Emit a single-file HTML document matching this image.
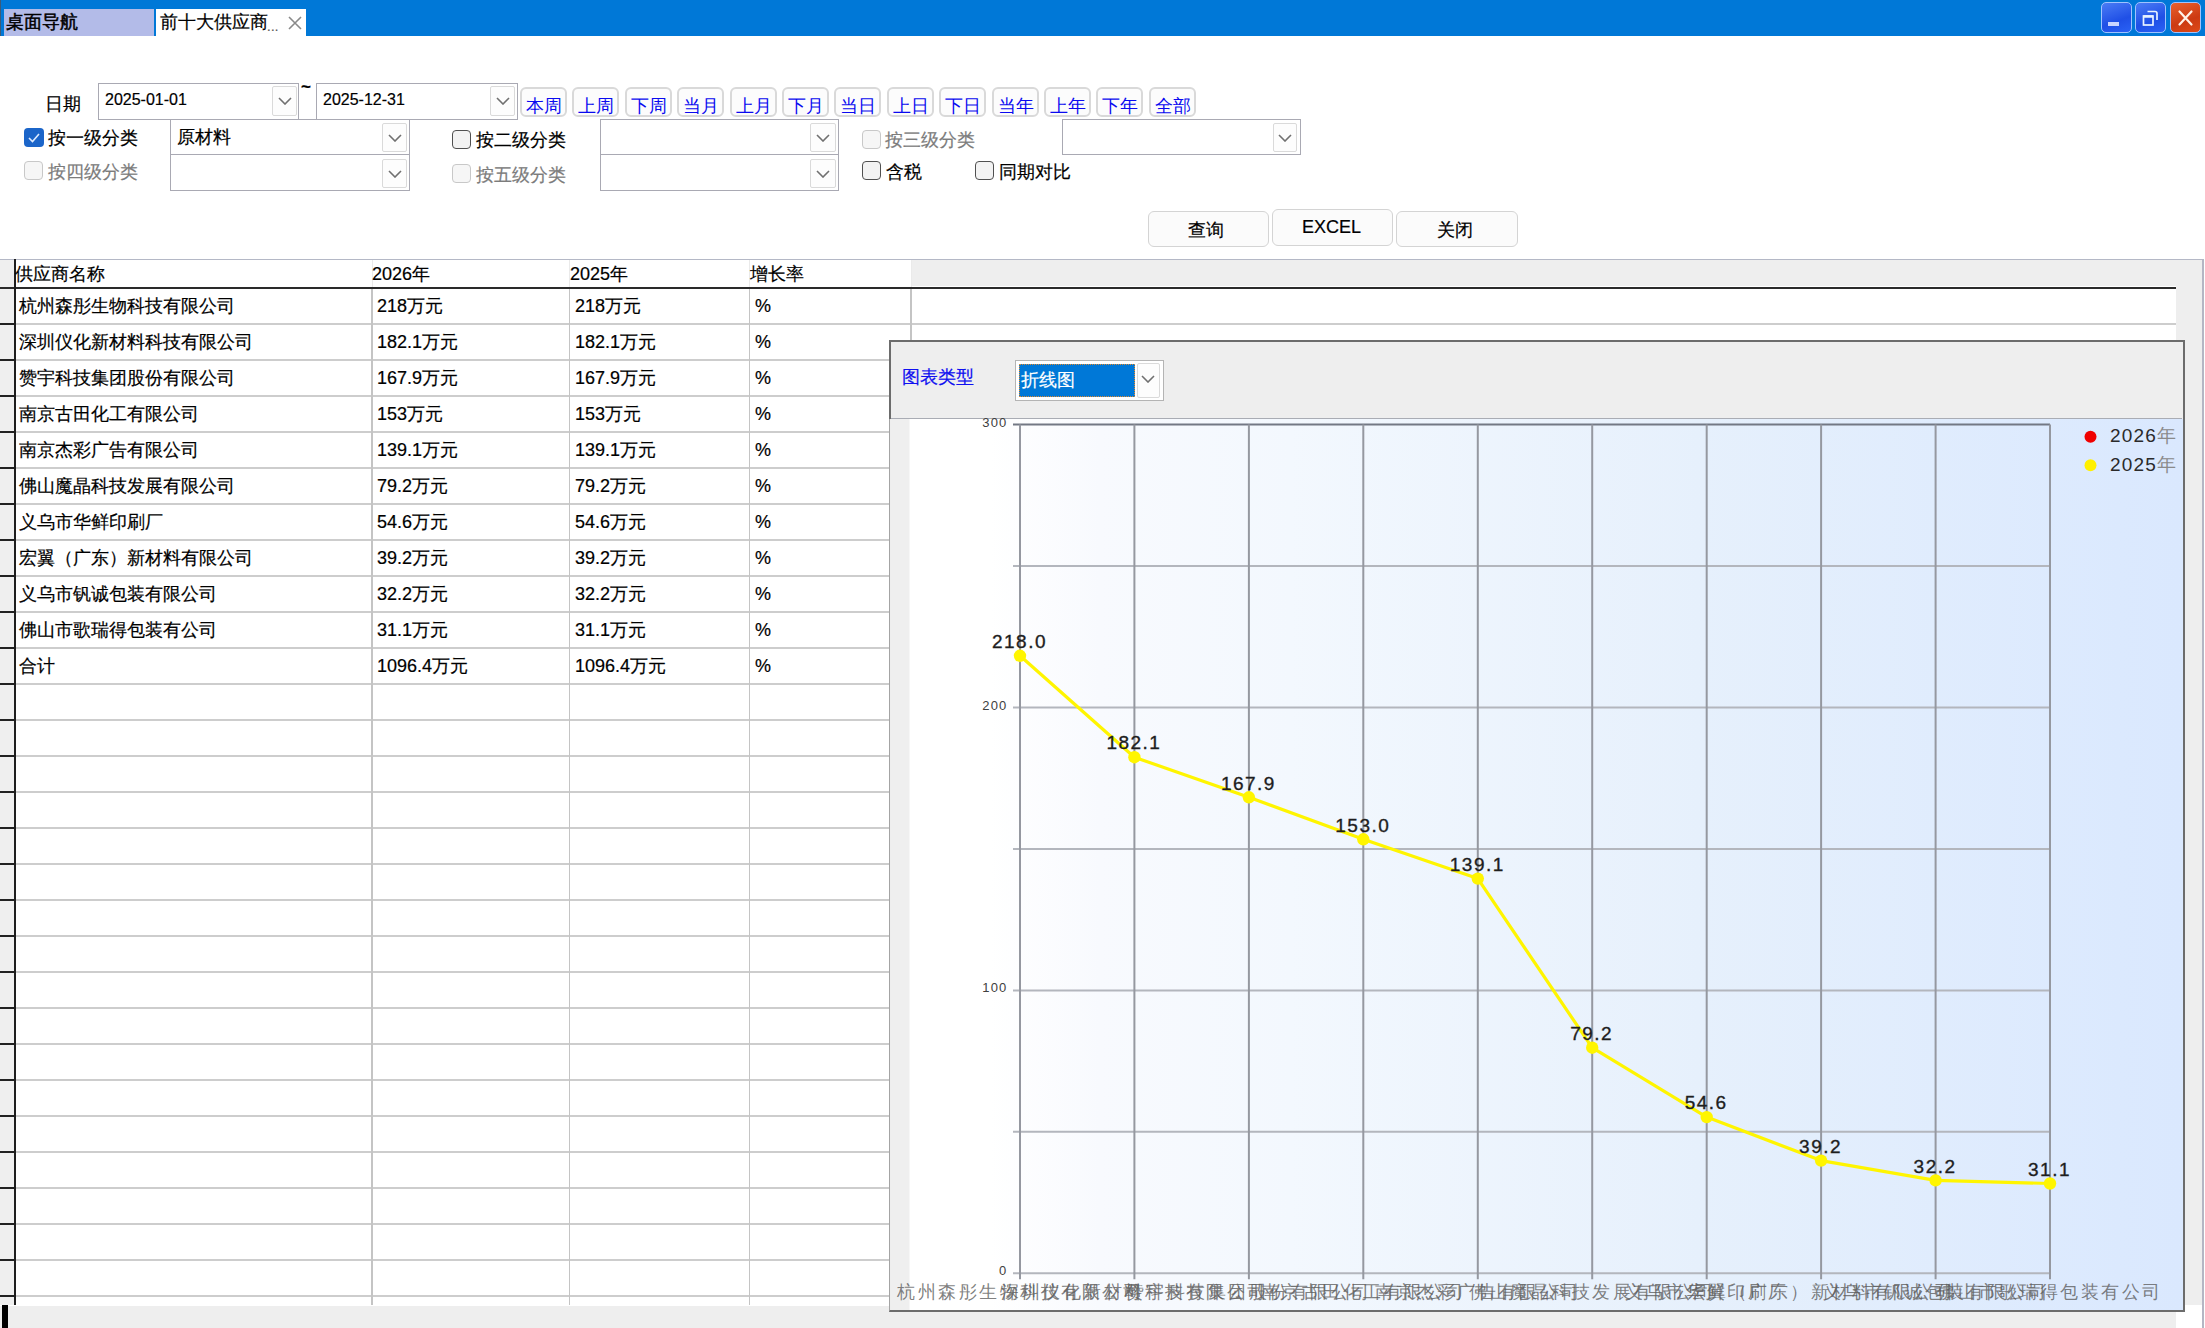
<!DOCTYPE html><html><head><meta charset="utf-8"><style>
*{box-sizing:border-box;margin:0;padding:0}
html,body{width:2205px;height:1328px;overflow:hidden;background:#fff;font-family:"Liberation Sans", sans-serif;color:#000}
.a{position:absolute}
.t{position:absolute;white-space:nowrap;line-height:1;-webkit-text-stroke:0.2px currentColor}
.cb{position:absolute;width:19px;height:19px;border:1.5px solid #505050;border-radius:4px;background:#F3F3F3}
.cbd{border-color:#C8C8C8;background:#F6F6F6}
.combo{position:absolute;border:1.5px solid #A9A9B3;background:#fff}
.dd{position:absolute;border:1px solid #DADADA;border-radius:2px;background:#FDFDFD}
.qb{position:absolute;top:87px;width:47px;height:30px;border:2px solid #D9D9D9;border-radius:6px;background:#FCFCFC;color:#0A0AF0;font-size:18px}
.qb span{position:absolute;left:4px;top:8px;line-height:1}
.btn{position:absolute;border:1.5px solid #D4D4D4;border-radius:6px;background:#FBFBFB;font-size:18px}
</style></head><body>
<div class="a" style="left:0;top:0;width:2205px;height:36px;background:#0078D7"></div>
<div class="a" style="left:0;top:0;width:1px;height:36px;background:#3C5A78"></div>
<div class="a" style="left:4px;top:9px;width:150px;height:27px;background:#B3BBE8"></div>
<div class="t" style="left:6px;top:13px;font-size:18px;-webkit-text-stroke:0.5px #000">桌面导航</div>
<div class="a" style="left:156px;top:9px;width:150px;height:27px;background:#FFFFFF"></div>
<div class="t" style="left:160px;top:13px;font-size:18px">前十大供应商</div>
<div class="t" style="left:267px;top:20px;font-size:13px;color:#555;letter-spacing:0.3px">...</div>
<svg class="a" style="left:288px;top:16px" width="14" height="14" viewBox="0 0 14 14"><path d="M1,1 L13,13 M13,1 L1,13" stroke="#8A8A8A" stroke-width="1.6"/></svg>
<div class="a" style="left:2101px;top:2px;width:31px;height:31px;border:1.5px solid #9EC3FF;border-radius:5px;background:linear-gradient(160deg,#4A7CF5,#1F4FE6 60%,#2A62F5)"></div><div class="a" style="left:2108px;top:22px;width:11px;height:4px;background:#C9D5FF"></div>
<div class="a" style="left:2135px;top:2px;width:31px;height:31px;border:1.5px solid #9EC3FF;border-radius:5px;background:linear-gradient(160deg,#4A7CF5,#1F4FE6 60%,#2A62F5)"></div><svg class="a" style="left:2140px;top:8px" width="22" height="20" viewBox="0 0 22 20"><rect x="3.5" y="8" width="9.5" height="9" fill="none" stroke="#E8F2FF" stroke-width="1.7"/><path d="M3.5,8.5 H13" stroke="#E8F2FF" stroke-width="2.5"/><path d="M7.5,3.5 H15 Q17,3.5 17,5.5 V12" fill="none" stroke="#E8F2FF" stroke-width="1.7"/></svg>
<div class="a" style="left:2170px;top:2px;width:31px;height:31px;border:1.5px solid #9EC3FF;border-radius:5px;background:linear-gradient(160deg,#E8602E,#CC3A12 60%,#DE4A18)"></div><svg class="a" style="left:2175px;top:8px" width="21" height="20" viewBox="0 0 21 20"><path d="M4.5,3.5 L16.5,16.5 M16.5,3.5 L4.5,16.5" stroke="#FFF2E8" stroke-width="2.2" stroke-linecap="round"/></svg>
<div class="t" style="left:45px;top:95px;font-size:18px">日期</div>
<div class="combo" style="left:98px;top:83px;width:201px;height:36.5px"></div>
<div class="dd" style="left:272px;top:86px;width:25px;height:30px"></div>
<svg class="a" style="left:278px;top:97px" width="14" height="8" viewBox="0 0 14 8"><polyline points="1,1 7.0,7 13,1" fill="none" stroke="#707070" stroke-width="1.6"/></svg>
<div class="t" style="left:105px;top:92px;font-size:16px">2025-01-01</div>
<div class="combo" style="left:316px;top:83px;width:202px;height:36.5px"></div>
<div class="dd" style="left:490px;top:86px;width:25px;height:30px"></div>
<svg class="a" style="left:496px;top:97px" width="14" height="8" viewBox="0 0 14 8"><polyline points="1,1 7.0,7 13,1" fill="none" stroke="#707070" stroke-width="1.6"/></svg>
<div class="t" style="left:323px;top:92px;font-size:16px">2025-12-31</div>
<div class="t" style="left:301px;top:78px;font-size:17px;font-weight:bold">~</div>
<div class="qb" style="left:520px"><span>本周</span></div>
<div class="qb" style="left:572px"><span>上周</span></div>
<div class="qb" style="left:625px"><span>下周</span></div>
<div class="qb" style="left:677px"><span>当月</span></div>
<div class="qb" style="left:730px"><span>上月</span></div>
<div class="qb" style="left:782px"><span>下月</span></div>
<div class="qb" style="left:834px"><span>当日</span></div>
<div class="qb" style="left:887px"><span>上日</span></div>
<div class="qb" style="left:939px"><span>下日</span></div>
<div class="qb" style="left:992px"><span>当年</span></div>
<div class="qb" style="left:1044px"><span>上年</span></div>
<div class="qb" style="left:1096px"><span>下年</span></div>
<div class="qb" style="left:1149px"><span>全部</span></div>
<div class="a" style="left:24px;top:128px;width:20px;height:19px;border-radius:4px;background:#1B65C9"></div>
<svg class="a" style="left:24px;top:128px" width="20" height="19" viewBox="0 0 20 19"><polyline points="5,10 8.5,13.5 15,6" fill="none" stroke="#DDEBFF" stroke-width="1.6"/></svg>
<div class="t" style="left:48px;top:129px;font-size:18px">按一级分类</div>
<div class="combo" style="left:170px;top:118.5px;width:240px;height:37px"></div>
<div class="dd" style="left:382px;top:123px;width:25px;height:29px"></div>
<svg class="a" style="left:388px;top:134px" width="14" height="8" viewBox="0 0 14 8"><polyline points="1,1 7.0,7 13,1" fill="none" stroke="#707070" stroke-width="1.6"/></svg>
<div class="t" style="left:177px;top:128px;font-size:18px">原材料</div>
<div class="cb" style="left:452px;top:130px"></div>
<div class="t" style="left:476px;top:131px;font-size:18px">按二级分类</div>
<div class="combo" style="left:600px;top:118.5px;width:239px;height:37px"></div>
<div class="dd" style="left:810px;top:123px;width:26px;height:29px"></div>
<svg class="a" style="left:816px;top:134px" width="14" height="8" viewBox="0 0 14 8"><polyline points="1,1 7.0,7 13,1" fill="none" stroke="#707070" stroke-width="1.6"/></svg>
<div class="cb cbd" style="left:862px;top:130px"></div>
<div class="t" style="left:885px;top:131px;font-size:18px;color:#7C7C7C">按三级分类</div>
<div class="combo" style="left:1062px;top:119px;width:239px;height:36px"></div>
<div class="dd" style="left:1273px;top:123px;width:24px;height:29px"></div>
<svg class="a" style="left:1278px;top:134px" width="14" height="8" viewBox="0 0 14 8"><polyline points="1,1 7.0,7 13,1" fill="none" stroke="#707070" stroke-width="1.6"/></svg>
<div class="cb cbd" style="left:24px;top:161px"></div>
<div class="t" style="left:48px;top:163px;font-size:18px;color:#7C7C7C">按四级分类</div>
<div class="combo" style="left:170px;top:153.5px;width:240px;height:37.5px"></div>
<div class="dd" style="left:382px;top:159px;width:25px;height:29px"></div>
<svg class="a" style="left:388px;top:170px" width="14" height="8" viewBox="0 0 14 8"><polyline points="1,1 7.0,7 13,1" fill="none" stroke="#707070" stroke-width="1.6"/></svg>
<div class="cb cbd" style="left:452px;top:164px"></div>
<div class="t" style="left:476px;top:166px;font-size:18px;color:#7C7C7C">按五级分类</div>
<div class="combo" style="left:600px;top:153.5px;width:239px;height:37.5px"></div>
<div class="dd" style="left:810px;top:159px;width:26px;height:29px"></div>
<svg class="a" style="left:816px;top:170px" width="14" height="8" viewBox="0 0 14 8"><polyline points="1,1 7.0,7 13,1" fill="none" stroke="#707070" stroke-width="1.6"/></svg>
<div class="cb" style="left:862px;top:161px"></div>
<div class="t" style="left:886px;top:163px;font-size:18px">含税</div>
<div class="cb" style="left:975px;top:161px"></div>
<div class="t" style="left:999px;top:163px;font-size:18px">同期对比</div>
<div class="btn" style="left:1148px;top:211px;width:121px;height:36px"></div>
<div class="t" style="left:1188px;top:221px;font-size:18px">查询</div>
<div class="btn" style="left:1272px;top:209px;width:121px;height:37px"></div>
<div class="t" style="left:1302px;top:218px;font-size:18px">EXCEL</div>
<div class="btn" style="left:1396px;top:211px;width:122px;height:36px"></div>
<div class="t" style="left:1437px;top:221px;font-size:18px">关闭</div>
<div class="a" style="left:0;top:258.5px;width:2204px;height:1.5px;background:#B4B8C6"></div>
<div class="a" style="left:2176px;top:260px;width:27px;height:1045px;background:#EEEEEE"></div>
<div class="a" style="left:2202px;top:259px;width:1.5px;height:1069px;background:#B4B6C4"></div>
<div class="a" style="left:911px;top:260px;width:1265px;height:26px;background:#EEEEEE"></div>
<div class="a" style="left:0;top:260px;width:14px;height:1045px;background:#EFEFEF"></div>
<div class="a" style="left:15px;top:323px;width:2161px;height:2px;background:#CDCDCD"></div>
<div class="a" style="left:0;top:323px;width:15px;height:2px;background:#222"></div>
<div class="a" style="left:15px;top:359px;width:2161px;height:2px;background:#CDCDCD"></div>
<div class="a" style="left:0;top:359px;width:15px;height:2px;background:#222"></div>
<div class="a" style="left:15px;top:395px;width:2161px;height:2px;background:#CDCDCD"></div>
<div class="a" style="left:0;top:395px;width:15px;height:2px;background:#222"></div>
<div class="a" style="left:15px;top:431px;width:2161px;height:2px;background:#CDCDCD"></div>
<div class="a" style="left:0;top:431px;width:15px;height:2px;background:#222"></div>
<div class="a" style="left:15px;top:467px;width:2161px;height:2px;background:#CDCDCD"></div>
<div class="a" style="left:0;top:467px;width:15px;height:2px;background:#222"></div>
<div class="a" style="left:15px;top:503px;width:2161px;height:2px;background:#CDCDCD"></div>
<div class="a" style="left:0;top:503px;width:15px;height:2px;background:#222"></div>
<div class="a" style="left:15px;top:539px;width:2161px;height:2px;background:#CDCDCD"></div>
<div class="a" style="left:0;top:539px;width:15px;height:2px;background:#222"></div>
<div class="a" style="left:15px;top:575px;width:2161px;height:2px;background:#CDCDCD"></div>
<div class="a" style="left:0;top:575px;width:15px;height:2px;background:#222"></div>
<div class="a" style="left:15px;top:611px;width:2161px;height:2px;background:#CDCDCD"></div>
<div class="a" style="left:0;top:611px;width:15px;height:2px;background:#222"></div>
<div class="a" style="left:15px;top:647px;width:2161px;height:2px;background:#CDCDCD"></div>
<div class="a" style="left:0;top:647px;width:15px;height:2px;background:#222"></div>
<div class="a" style="left:15px;top:683px;width:2161px;height:2px;background:#CDCDCD"></div>
<div class="a" style="left:0;top:683px;width:15px;height:2px;background:#222"></div>
<div class="a" style="left:15px;top:719px;width:2161px;height:2px;background:#CDCDCD"></div>
<div class="a" style="left:0;top:719px;width:15px;height:2px;background:#222"></div>
<div class="a" style="left:15px;top:755px;width:2161px;height:2px;background:#CDCDCD"></div>
<div class="a" style="left:0;top:755px;width:15px;height:2px;background:#222"></div>
<div class="a" style="left:15px;top:791px;width:2161px;height:2px;background:#CDCDCD"></div>
<div class="a" style="left:0;top:791px;width:15px;height:2px;background:#222"></div>
<div class="a" style="left:15px;top:827px;width:2161px;height:2px;background:#CDCDCD"></div>
<div class="a" style="left:0;top:827px;width:15px;height:2px;background:#222"></div>
<div class="a" style="left:15px;top:863px;width:2161px;height:2px;background:#CDCDCD"></div>
<div class="a" style="left:0;top:863px;width:15px;height:2px;background:#222"></div>
<div class="a" style="left:15px;top:899px;width:2161px;height:2px;background:#CDCDCD"></div>
<div class="a" style="left:0;top:899px;width:15px;height:2px;background:#222"></div>
<div class="a" style="left:15px;top:935px;width:2161px;height:2px;background:#CDCDCD"></div>
<div class="a" style="left:0;top:935px;width:15px;height:2px;background:#222"></div>
<div class="a" style="left:15px;top:971px;width:2161px;height:2px;background:#CDCDCD"></div>
<div class="a" style="left:0;top:971px;width:15px;height:2px;background:#222"></div>
<div class="a" style="left:15px;top:1007px;width:2161px;height:2px;background:#CDCDCD"></div>
<div class="a" style="left:0;top:1007px;width:15px;height:2px;background:#222"></div>
<div class="a" style="left:15px;top:1043px;width:2161px;height:2px;background:#CDCDCD"></div>
<div class="a" style="left:0;top:1043px;width:15px;height:2px;background:#222"></div>
<div class="a" style="left:15px;top:1079px;width:2161px;height:2px;background:#CDCDCD"></div>
<div class="a" style="left:0;top:1079px;width:15px;height:2px;background:#222"></div>
<div class="a" style="left:15px;top:1115px;width:2161px;height:2px;background:#CDCDCD"></div>
<div class="a" style="left:0;top:1115px;width:15px;height:2px;background:#222"></div>
<div class="a" style="left:15px;top:1151px;width:2161px;height:2px;background:#CDCDCD"></div>
<div class="a" style="left:0;top:1151px;width:15px;height:2px;background:#222"></div>
<div class="a" style="left:15px;top:1187px;width:2161px;height:2px;background:#CDCDCD"></div>
<div class="a" style="left:0;top:1187px;width:15px;height:2px;background:#222"></div>
<div class="a" style="left:15px;top:1223px;width:2161px;height:2px;background:#CDCDCD"></div>
<div class="a" style="left:0;top:1223px;width:15px;height:2px;background:#222"></div>
<div class="a" style="left:15px;top:1259px;width:2161px;height:2px;background:#CDCDCD"></div>
<div class="a" style="left:0;top:1259px;width:15px;height:2px;background:#222"></div>
<div class="a" style="left:15px;top:1295px;width:2161px;height:2px;background:#CDCDCD"></div>
<div class="a" style="left:0;top:1295px;width:15px;height:2px;background:#222"></div>
<div class="a" style="left:371.25px;top:288px;width:1.5px;height:1017px;background:#C4C4C4"></div>
<div class="a" style="left:371.5px;top:260px;width:1px;height:27px;background:#EAEAEA"></div>
<div class="a" style="left:568.75px;top:288px;width:1.5px;height:1017px;background:#C4C4C4"></div>
<div class="a" style="left:569.0px;top:260px;width:1px;height:27px;background:#EAEAEA"></div>
<div class="a" style="left:748.75px;top:288px;width:1.5px;height:1017px;background:#C4C4C4"></div>
<div class="a" style="left:749.0px;top:260px;width:1px;height:27px;background:#EAEAEA"></div>
<div class="a" style="left:910.25px;top:288px;width:1.5px;height:1017px;background:#C4C4C4"></div>
<div class="a" style="left:910.5px;top:260px;width:1px;height:27px;background:#EAEAEA"></div>
<div class="a" style="left:0;top:286.5px;width:2176px;height:2px;background:#2A2A2A"></div>
<div class="a" style="left:13.5px;top:259px;width:2px;height:1046px;background:#1E1E1E"></div>
<div class="t" style="left:15px;top:265px;font-size:18px">供应商名称</div>
<div class="t" style="left:372px;top:265px;font-size:18px">2026年</div>
<div class="t" style="left:570px;top:265px;font-size:18px">2025年</div>
<div class="t" style="left:750px;top:265px;font-size:18px">增长率</div>
<div class="t" style="left:19px;top:297px;font-size:18px">杭州森彤生物科技有限公司</div>
<div class="t" style="left:377px;top:297px;font-size:18px">218万元</div>
<div class="t" style="left:575px;top:297px;font-size:18px">218万元</div>
<div class="t" style="left:755px;top:297px;font-size:18px">%</div>
<div class="t" style="left:19px;top:333px;font-size:18px">深圳仪化新材料科技有限公司</div>
<div class="t" style="left:377px;top:333px;font-size:18px">182.1万元</div>
<div class="t" style="left:575px;top:333px;font-size:18px">182.1万元</div>
<div class="t" style="left:755px;top:333px;font-size:18px">%</div>
<div class="t" style="left:19px;top:369px;font-size:18px">赞宇科技集团股份有限公司</div>
<div class="t" style="left:377px;top:369px;font-size:18px">167.9万元</div>
<div class="t" style="left:575px;top:369px;font-size:18px">167.9万元</div>
<div class="t" style="left:755px;top:369px;font-size:18px">%</div>
<div class="t" style="left:19px;top:405px;font-size:18px">南京古田化工有限公司</div>
<div class="t" style="left:377px;top:405px;font-size:18px">153万元</div>
<div class="t" style="left:575px;top:405px;font-size:18px">153万元</div>
<div class="t" style="left:755px;top:405px;font-size:18px">%</div>
<div class="t" style="left:19px;top:441px;font-size:18px">南京杰彩广告有限公司</div>
<div class="t" style="left:377px;top:441px;font-size:18px">139.1万元</div>
<div class="t" style="left:575px;top:441px;font-size:18px">139.1万元</div>
<div class="t" style="left:755px;top:441px;font-size:18px">%</div>
<div class="t" style="left:19px;top:477px;font-size:18px">佛山魔晶科技发展有限公司</div>
<div class="t" style="left:377px;top:477px;font-size:18px">79.2万元</div>
<div class="t" style="left:575px;top:477px;font-size:18px">79.2万元</div>
<div class="t" style="left:755px;top:477px;font-size:18px">%</div>
<div class="t" style="left:19px;top:513px;font-size:18px">义乌市华鲜印刷厂</div>
<div class="t" style="left:377px;top:513px;font-size:18px">54.6万元</div>
<div class="t" style="left:575px;top:513px;font-size:18px">54.6万元</div>
<div class="t" style="left:755px;top:513px;font-size:18px">%</div>
<div class="t" style="left:19px;top:549px;font-size:18px">宏翼（广东）新材料有限公司</div>
<div class="t" style="left:377px;top:549px;font-size:18px">39.2万元</div>
<div class="t" style="left:575px;top:549px;font-size:18px">39.2万元</div>
<div class="t" style="left:755px;top:549px;font-size:18px">%</div>
<div class="t" style="left:19px;top:585px;font-size:18px">义乌市钒诚包装有限公司</div>
<div class="t" style="left:377px;top:585px;font-size:18px">32.2万元</div>
<div class="t" style="left:575px;top:585px;font-size:18px">32.2万元</div>
<div class="t" style="left:755px;top:585px;font-size:18px">%</div>
<div class="t" style="left:19px;top:621px;font-size:18px">佛山市歌瑞得包装有公司</div>
<div class="t" style="left:377px;top:621px;font-size:18px">31.1万元</div>
<div class="t" style="left:575px;top:621px;font-size:18px">31.1万元</div>
<div class="t" style="left:755px;top:621px;font-size:18px">%</div>
<div class="t" style="left:19px;top:657px;font-size:18px">合计</div>
<div class="t" style="left:377px;top:657px;font-size:18px">1096.4万元</div>
<div class="t" style="left:575px;top:657px;font-size:18px">1096.4万元</div>
<div class="t" style="left:755px;top:657px;font-size:18px">%</div>
<div class="a" style="left:0;top:1306px;width:2176px;height:22px;background:#EEEEEE"></div>
<div class="a" style="left:2176px;top:1305px;width:26px;height:23px;background:#FFFFFF"></div>
<div class="a" style="left:2px;top:1305px;width:6px;height:23px;background:#000"></div>
<div class="a" style="left:889px;top:339.5px;width:1295.5px;height:972.5px;border:2px solid #6C6C6C;border-left:1.5px solid #A4A4A4;background:#EEEEEE"></div>
<div class="a" style="left:889px;top:339.5px;width:1.5px;height:79px;background:#6C6C6C"></div>
<div class="a" style="left:890.5px;top:419px;width:1292px;height:891px;background:linear-gradient(90deg,#EFEFEF 0px,#EFEFEF 18px,#FFFFFF 19px,#FFFFFF 99px,#F8FAFE 209px,#F3F8FE 399px,#E6F0FC 809px,#DBE9FE 1229px,#DAE8FE 1291px)"></div>
<div class="a" style="left:891px;top:417.5px;width:1291px;height:1.5px;background:#A9ACB4"></div>
<div class="t" style="left:902px;top:368px;font-size:18px;color:#1010F0">图表类型</div>
<div class="a" style="left:1015px;top:360px;width:149px;height:41px;border:1.5px solid #B4B4B4;background:#FFFFFF"></div>
<div class="a" style="left:1019px;top:363.5px;width:116px;height:33px;background:#0078D7;border:1.5px dotted #E08A30"></div>
<div class="dd" style="left:1137px;top:363px;width:23px;height:35px"></div>
<svg class="a" style="left:1141px;top:375px" width="14" height="8" viewBox="0 0 14 8"><polyline points="1,1 7.0,7 13,1" fill="none" stroke="#707070" stroke-width="1.6"/></svg>
<div class="t" style="left:1021px;top:371px;font-size:18px;color:#FFFFFF">折线图</div>
<svg class="a" style="left:0;top:0" width="2205" height="1328" viewBox="0 0 2205 1328"><line x1="1013" y1="424.6" x2="2050.0" y2="424.6" stroke="#737884" stroke-width="2"/><line x1="1013" y1="566.1" x2="2050.0" y2="566.1" stroke="#B3B6BD" stroke-width="2"/><line x1="1013" y1="707.5" x2="2050.0" y2="707.5" stroke="#B3B6BD" stroke-width="2"/><line x1="1013" y1="849.0" x2="2050.0" y2="849.0" stroke="#B3B6BD" stroke-width="2"/><line x1="1013" y1="990.4" x2="2050.0" y2="990.4" stroke="#B3B6BD" stroke-width="2"/><line x1="1013" y1="1131.8" x2="2050.0" y2="1131.8" stroke="#B3B6BD" stroke-width="2"/><line x1="1013" y1="1273.3" x2="2050.0" y2="1273.3" stroke="#B3B6BD" stroke-width="2"/><line x1="1020.0" y1="424.6" x2="1020.0" y2="1279.3" stroke="#9598A0" stroke-width="2"/><line x1="1134.4" y1="424.6" x2="1134.4" y2="1279.3" stroke="#9598A0" stroke-width="2"/><line x1="1248.9" y1="424.6" x2="1248.9" y2="1279.3" stroke="#9598A0" stroke-width="2"/><line x1="1363.3" y1="424.6" x2="1363.3" y2="1279.3" stroke="#9598A0" stroke-width="2"/><line x1="1477.8" y1="424.6" x2="1477.8" y2="1279.3" stroke="#9598A0" stroke-width="2"/><line x1="1592.2" y1="424.6" x2="1592.2" y2="1279.3" stroke="#9598A0" stroke-width="2"/><line x1="1706.7" y1="424.6" x2="1706.7" y2="1279.3" stroke="#9598A0" stroke-width="2"/><line x1="1821.1" y1="424.6" x2="1821.1" y2="1279.3" stroke="#9598A0" stroke-width="2"/><line x1="1935.6" y1="424.6" x2="1935.6" y2="1279.3" stroke="#9598A0" stroke-width="2"/><line x1="2050.0" y1="424.6" x2="2050.0" y2="1279.3" stroke="#9598A0" stroke-width="2"/><text x="1007.5" y="426.6" font-size="13" text-anchor="end" fill="#404040" font-family="Liberation Sans" letter-spacing="1.2">300</text><text x="1007.5" y="709.5" font-size="13" text-anchor="end" fill="#404040" font-family="Liberation Sans" letter-spacing="1.2">200</text><text x="1007.5" y="992.4" font-size="13" text-anchor="end" fill="#404040" font-family="Liberation Sans" letter-spacing="1.2">100</text><text x="1007.5" y="1275.3" font-size="13" text-anchor="end" fill="#404040" font-family="Liberation Sans" letter-spacing="1.2">0</text><polyline points="1020.0,655.8 1134.4,757.2 1248.9,797.3 1363.3,839.3 1477.8,878.6 1592.2,1047.7 1706.7,1117.1 1821.1,1160.6 1935.6,1180.4 2050.0,1183.5" fill="none" stroke="#FFF500" stroke-width="3.2" stroke-linejoin="round"/><circle cx="1020.0" cy="655.8" r="6.2" fill="#FFF500"/><text x="1019.5" y="648.0" font-size="19" text-anchor="middle" fill="#1E1E1E" stroke="#1E1E1E" stroke-width="0.35" font-family="Liberation Sans" letter-spacing="1.5">218.0</text><circle cx="1134.4" cy="757.2" r="6.2" fill="#FFF500"/><text x="1133.9" y="749.4" font-size="19" text-anchor="middle" fill="#1E1E1E" stroke="#1E1E1E" stroke-width="0.35" font-family="Liberation Sans" letter-spacing="1.5">182.1</text><circle cx="1248.9" cy="797.3" r="6.2" fill="#FFF500"/><text x="1248.4" y="789.5" font-size="19" text-anchor="middle" fill="#1E1E1E" stroke="#1E1E1E" stroke-width="0.35" font-family="Liberation Sans" letter-spacing="1.5">167.9</text><circle cx="1363.3" cy="839.3" r="6.2" fill="#FFF500"/><text x="1362.8" y="831.5" font-size="19" text-anchor="middle" fill="#1E1E1E" stroke="#1E1E1E" stroke-width="0.35" font-family="Liberation Sans" letter-spacing="1.5">153.0</text><circle cx="1477.8" cy="878.6" r="6.2" fill="#FFF500"/><text x="1477.3" y="870.8" font-size="19" text-anchor="middle" fill="#1E1E1E" stroke="#1E1E1E" stroke-width="0.35" font-family="Liberation Sans" letter-spacing="1.5">139.1</text><circle cx="1592.2" cy="1047.7" r="6.2" fill="#FFF500"/><text x="1591.7" y="1039.9" font-size="19" text-anchor="middle" fill="#1E1E1E" stroke="#1E1E1E" stroke-width="0.35" font-family="Liberation Sans" letter-spacing="1.5">79.2</text><circle cx="1706.7" cy="1117.1" r="6.2" fill="#FFF500"/><text x="1706.2" y="1109.3" font-size="19" text-anchor="middle" fill="#1E1E1E" stroke="#1E1E1E" stroke-width="0.35" font-family="Liberation Sans" letter-spacing="1.5">54.6</text><circle cx="1821.1" cy="1160.6" r="6.2" fill="#FFF500"/><text x="1820.6" y="1152.8" font-size="19" text-anchor="middle" fill="#1E1E1E" stroke="#1E1E1E" stroke-width="0.35" font-family="Liberation Sans" letter-spacing="1.5">39.2</text><circle cx="1935.6" cy="1180.4" r="6.2" fill="#FFF500"/><text x="1935.1" y="1172.6" font-size="19" text-anchor="middle" fill="#1E1E1E" stroke="#1E1E1E" stroke-width="0.35" font-family="Liberation Sans" letter-spacing="1.5">32.2</text><circle cx="2050.0" cy="1183.5" r="6.2" fill="#FFF500"/><text x="2049.5" y="1175.7" font-size="19" text-anchor="middle" fill="#1E1E1E" stroke="#1E1E1E" stroke-width="0.35" font-family="Liberation Sans" letter-spacing="1.5">31.1</text><circle cx="2090.5" cy="436.7" r="6" fill="#F00000"/><circle cx="2090.5" cy="465.3" r="6" fill="#FFF000"/><text x="2110" y="442" font-size="19" fill="#2A2A2A" font-family="Liberation Sans" letter-spacing="1.2">2026<tspan fill="#8A8A8A">年</tspan></text><text x="2110" y="470.6" font-size="19" fill="#2A2A2A" font-family="Liberation Sans" letter-spacing="1.2">2025<tspan fill="#8A8A8A">年</tspan></text><text x="1020.0" y="1298" font-size="18" text-anchor="middle" fill="#5E5E5E" fill-opacity="0.8" font-family="Liberation Serif" letter-spacing="2.5">杭州森彤生物科技有限公司</text><text x="1134.4" y="1298" font-size="18" text-anchor="middle" fill="#5E5E5E" fill-opacity="0.8" font-family="Liberation Serif" letter-spacing="2.5">深圳仪化新材料科技有限公司</text><text x="1248.9" y="1298" font-size="18" text-anchor="middle" fill="#5E5E5E" fill-opacity="0.8" font-family="Liberation Serif" letter-spacing="2.5">赞宇科技集团股份有限公司</text><text x="1363.3" y="1298" font-size="18" text-anchor="middle" fill="#5E5E5E" fill-opacity="0.8" font-family="Liberation Serif" letter-spacing="2.5">南京古田化工有限公司</text><text x="1477.8" y="1298" font-size="18" text-anchor="middle" fill="#5E5E5E" fill-opacity="0.8" font-family="Liberation Serif" letter-spacing="2.5">南京杰彩广告有限公司</text><text x="1592.2" y="1298" font-size="18" text-anchor="middle" fill="#5E5E5E" fill-opacity="0.8" font-family="Liberation Serif" letter-spacing="2.5">佛山魔晶科技发展有限公司</text><text x="1706.7" y="1298" font-size="18" text-anchor="middle" fill="#5E5E5E" fill-opacity="0.8" font-family="Liberation Serif" letter-spacing="2.5">义乌市华鲜印刷厂</text><text x="1821.1" y="1298" font-size="18" text-anchor="middle" fill="#5E5E5E" fill-opacity="0.8" font-family="Liberation Serif" letter-spacing="2.5">宏翼（广东）新材料有限公司</text><text x="1935.6" y="1298" font-size="18" text-anchor="middle" fill="#5E5E5E" fill-opacity="0.8" font-family="Liberation Serif" letter-spacing="2.5">义乌市钒诚包装有限公司</text><text x="2050.0" y="1298" font-size="18" text-anchor="middle" fill="#5E5E5E" fill-opacity="0.8" font-family="Liberation Serif" letter-spacing="2.5">佛山市歌瑞得包装有公司</text></svg>
</body></html>
